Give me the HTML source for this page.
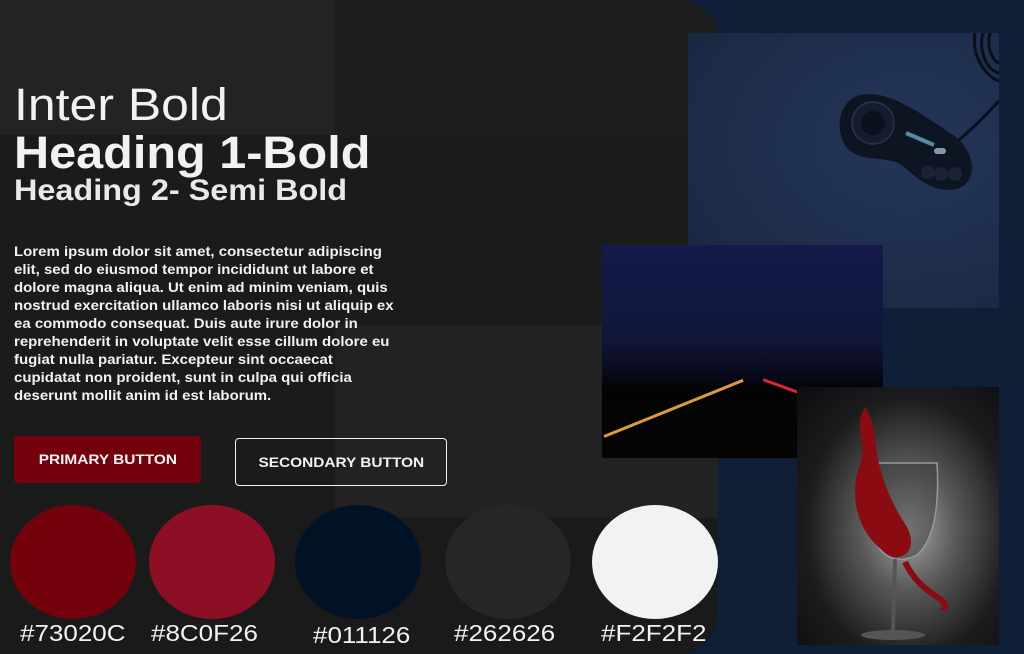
<!DOCTYPE html>
<html><head><meta charset="utf-8"><style>
*{margin:0;padding:0;box-sizing:border-box}
body{width:1024px;height:654px;overflow:hidden;background:#0f1f38;font-family:"Liberation Sans",sans-serif;color:#f2f2f2;position:relative}
.abs{position:absolute}
.panel{left:0;top:0;width:718px;height:654px;border-radius:0 40px 40px 0;overflow:hidden;background:#1b1b1b}
.t{white-space:nowrap;transform-origin:left top}
.lbl{font-size:23px;transform:scaleX(1.13)}
.btxt{display:inline-block;transform:scaleX(1.1)}
</style></head><body>
<div class="abs panel">
  <div class="abs" style="left:0;top:0;width:335px;height:135px;background:#232323"></div>
  <div class="abs" style="left:335px;top:0;width:383px;height:135px;background:#1e1e1e"></div>
  <div class="abs" style="left:335px;top:325px;width:383px;height:193px;background:#222"></div>
  <div class="abs" style="left:0;top:518px;width:718px;height:136px;background:#1a1a1a"></div>
</div>
<!-- photos -->
<div class="abs" style="left:688px;top:33px;width:311px;height:275px;background:radial-gradient(ellipse at 70% 40%,#24365a,#1c2b46 70%,#17243c);overflow:hidden">
  <svg width="311" height="275" style="position:absolute;left:0;top:0">
    <path d="M270 108 C 285 95, 300 80, 311 68" stroke="#0a0f1a" stroke-width="3" fill="none"/>
    <path d="M295 0 C 290 20, 300 38, 311 40 M302 0 C 298 15, 305 28, 311 30 M287 0 C 283 25, 300 45, 311 48" stroke="#0a0f1a" stroke-width="3" fill="none"/>
    <path d="M172 62 C 200 56, 232 80, 262 100 C 288 115, 292 150, 268 156 C 246 160, 232 148, 215 133 C 200 122, 178 130, 162 118 C 146 104, 148 68, 172 62 Z" fill="#0e1522"/>
    <circle cx="185" cy="90" r="21" fill="#151d2c" stroke="#2a3548" stroke-width="1.5"/>
    <circle cx="185" cy="90" r="12" fill="#0b111c"/>
    <circle cx="240" cy="139" r="7" fill="#1a2334"/><circle cx="253" cy="141" r="7" fill="#1a2334"/><circle cx="267" cy="141" r="7" fill="#1a2334"/>
    <rect x="246" y="115" width="12" height="6" rx="3" fill="#8a94a4"/>
    <path d="M218 100 L 246 112" stroke="#5a8aa0" stroke-width="4"/>
  </svg>
</div>
<div class="abs" style="left:602px;top:245px;width:281px;height:213px;background:linear-gradient(180deg,#141a4a 0%,#101638 45%,#070818 62%,#030303 68%,#060504 100%);overflow:hidden">
  <div class="abs" style="left:2px;top:190px;width:150px;height:3px;background:#d89c3c;transform:rotate(-22deg);transform-origin:left"></div>
  <div class="abs" style="left:160px;top:140px;width:40px;height:3px;background:#d8243a;transform:rotate(20deg)"></div>
</div>
<div class="abs" style="left:797px;top:387px;width:202px;height:258px;background:radial-gradient(ellipse at 55% 55%,#a8a8a8 0%,#5a5a5a 30%,#1c1c1e 65%,#0c0c0e 100%);overflow:hidden">
  <svg width="202" height="258" style="position:absolute;left:0;top:0">
    <path d="M78 76 L140 76 C 142 110, 140 150, 120 168 C 100 178, 82 170, 78 150 Z" fill="rgba(60,60,60,.5)" stroke="#999" stroke-width="1.5"/>
    <path d="M68 20 C 55 40, 72 55, 62 80 C 52 110, 60 150, 95 170 C 110 172, 120 160, 110 140 C 90 110, 80 80, 78 50 C 76 35, 72 25, 68 20 Z" fill="#8a0c12"/>
    <path d="M98 172 L 96 245" stroke="#555" stroke-width="4"/>
    <ellipse cx="96" cy="248" rx="32" ry="5" fill="#555"/>
    <path d="M108 175 C 115 190, 125 200, 140 210 C 150 215, 150 225, 145 220" stroke="#8a0c12" stroke-width="6" fill="none"/>
  </svg>
</div>
<!-- text -->
<div class="abs t" style="left:14px;top:79px;font-size:45px;transform:scaleX(1.11)">Inter Bold</div>
<div class="abs t" style="left:14px;top:127px;font-size:45px;font-weight:bold;transform:scaleX(1.08)">Heading 1-Bold</div>
<div class="abs t" style="left:14px;top:174px;font-size:30px;font-weight:bold;transform:scaleX(1.08);opacity:.96">Heading 2- Semi Bold</div>
<div class="abs t" style="left:14px;top:242px;font-size:14px;font-weight:bold;line-height:18px;transform:scaleX(1.07)">Lorem ipsum dolor sit amet, consectetur adipiscing<br>elit, sed do eiusmod tempor incididunt ut labore et<br>dolore magna aliqua. Ut enim ad minim veniam, quis<br>nostrud exercitation ullamco laboris nisi ut aliquip ex<br>ea commodo consequat. Duis aute irure dolor in<br>reprehenderit in voluptate velit esse cillum dolore eu<br>fugiat nulla pariatur. Excepteur sint occaecat<br>cupidatat non proident, sunt in culpa qui officia<br>deserunt mollit anim id est laborum.</div>
<div class="abs" style="left:14px;top:436px;width:187px;height:47px;background:#73020c;border-radius:3px;font-size:14px;font-weight:bold;text-align:center;line-height:47px"><span class="btxt">PRIMARY BUTTON</span></div>
<div class="abs" style="left:235px;top:438px;width:212px;height:48px;border:1px solid #f2f2f2;border-radius:4px;font-size:14px;font-weight:bold;text-align:center;line-height:46px"><span class="btxt">SECONDARY BUTTON</span></div>
<!-- swatches -->
<div class="abs" style="left:10px;top:505px;width:126px;height:114px;border-radius:50%;background:#73020c"></div>
<div class="abs" style="left:149px;top:505px;width:126px;height:114px;border-radius:50%;background:#8c0f26"></div>
<div class="abs" style="left:295px;top:505px;width:126px;height:114px;border-radius:50%;background:#011126"></div>
<div class="abs" style="left:445px;top:505px;width:126px;height:114px;border-radius:50%;background:#262626"></div>
<div class="abs" style="left:592px;top:505px;width:126px;height:114px;border-radius:50%;background:#f2f2f2"></div>
<div class="abs t lbl" style="left:20px;top:620px">#73020C</div>
<div class="abs t lbl" style="left:151px;top:620px">#8C0F26</div>
<div class="abs t lbl" style="left:313px;top:622px">#011126</div>
<div class="abs t lbl" style="left:454px;top:620px">#262626</div>
<div class="abs t lbl" style="left:601px;top:620px">#F2F2F2</div>
</body></html>
